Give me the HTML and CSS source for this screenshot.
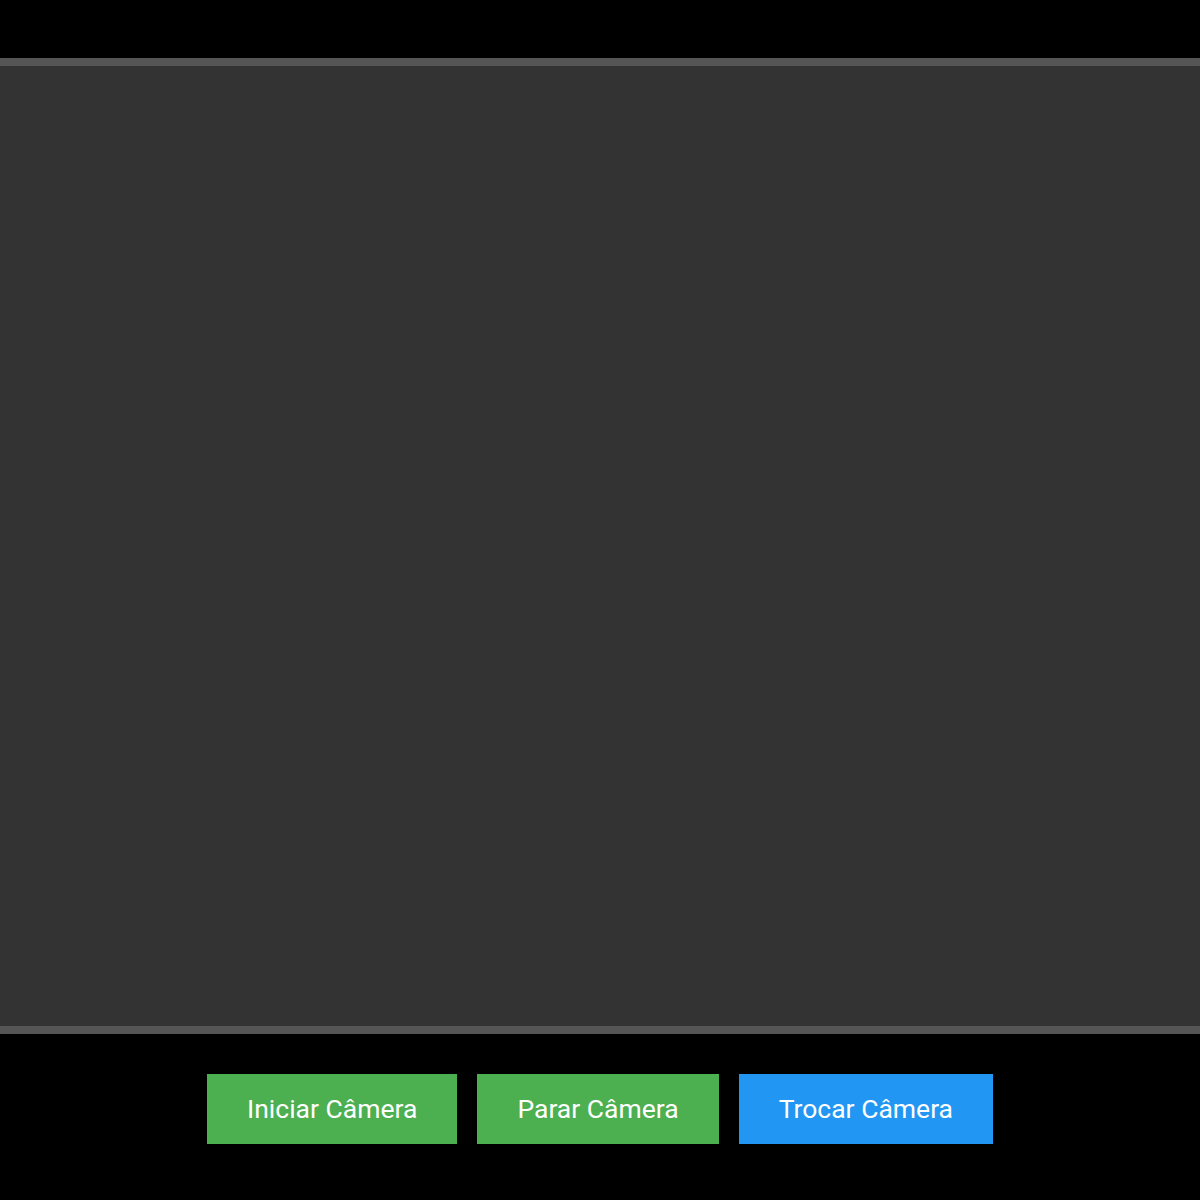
FILE: index.html
```html
<!DOCTYPE html>
<html lang="pt-BR">

<head>
    <meta charset="UTF-8">
    <meta name="viewport" content="width=device-width, initial-scale=1.0">
    <title>Câmera</title>
    <link rel="stylesheet" href="styles.css">
</head>

<body>

    <div class="camera">
        <div class="video" id="video"></div>
        <div class="controls">
            <button class="btn btn-start" id="start">Iniciar Câmera</button>
            <button class="btn btn-stop" id="stop">Parar Câmera</button>
            <button class="btn btn-switch" id="switch">Trocar Câmera</button>
        </div>
    </div>

</body>

</html>
```

FILE: styles.css
```css
body {
    font-family: Roboto, "Noto Sans", Arial, sans-serif;
    background-color: #000;
    margin: 0;
    padding: 0;
}

.camera {
    padding-top: 58px;
}

.video {
    height: 960px;
    background-color: #333;
    border-top: 8px solid #555;
    border-bottom: 8px solid #555;
}

.controls {
    display: flex;
    justify-content: center;
    gap: 20px;
    margin-top: 40px;
}

.btn {
    font-family: inherit;
    font-size: 26.5px;
    line-height: 30px;
    padding: 20px 40px;
    border: none;
    border-radius: 0;
    color: #fff;
    cursor: pointer;
}

.btn-start,
.btn-stop {
    background-color: #4caf50;
}

.btn-switch {
    background-color: #2196f3;
}
```
